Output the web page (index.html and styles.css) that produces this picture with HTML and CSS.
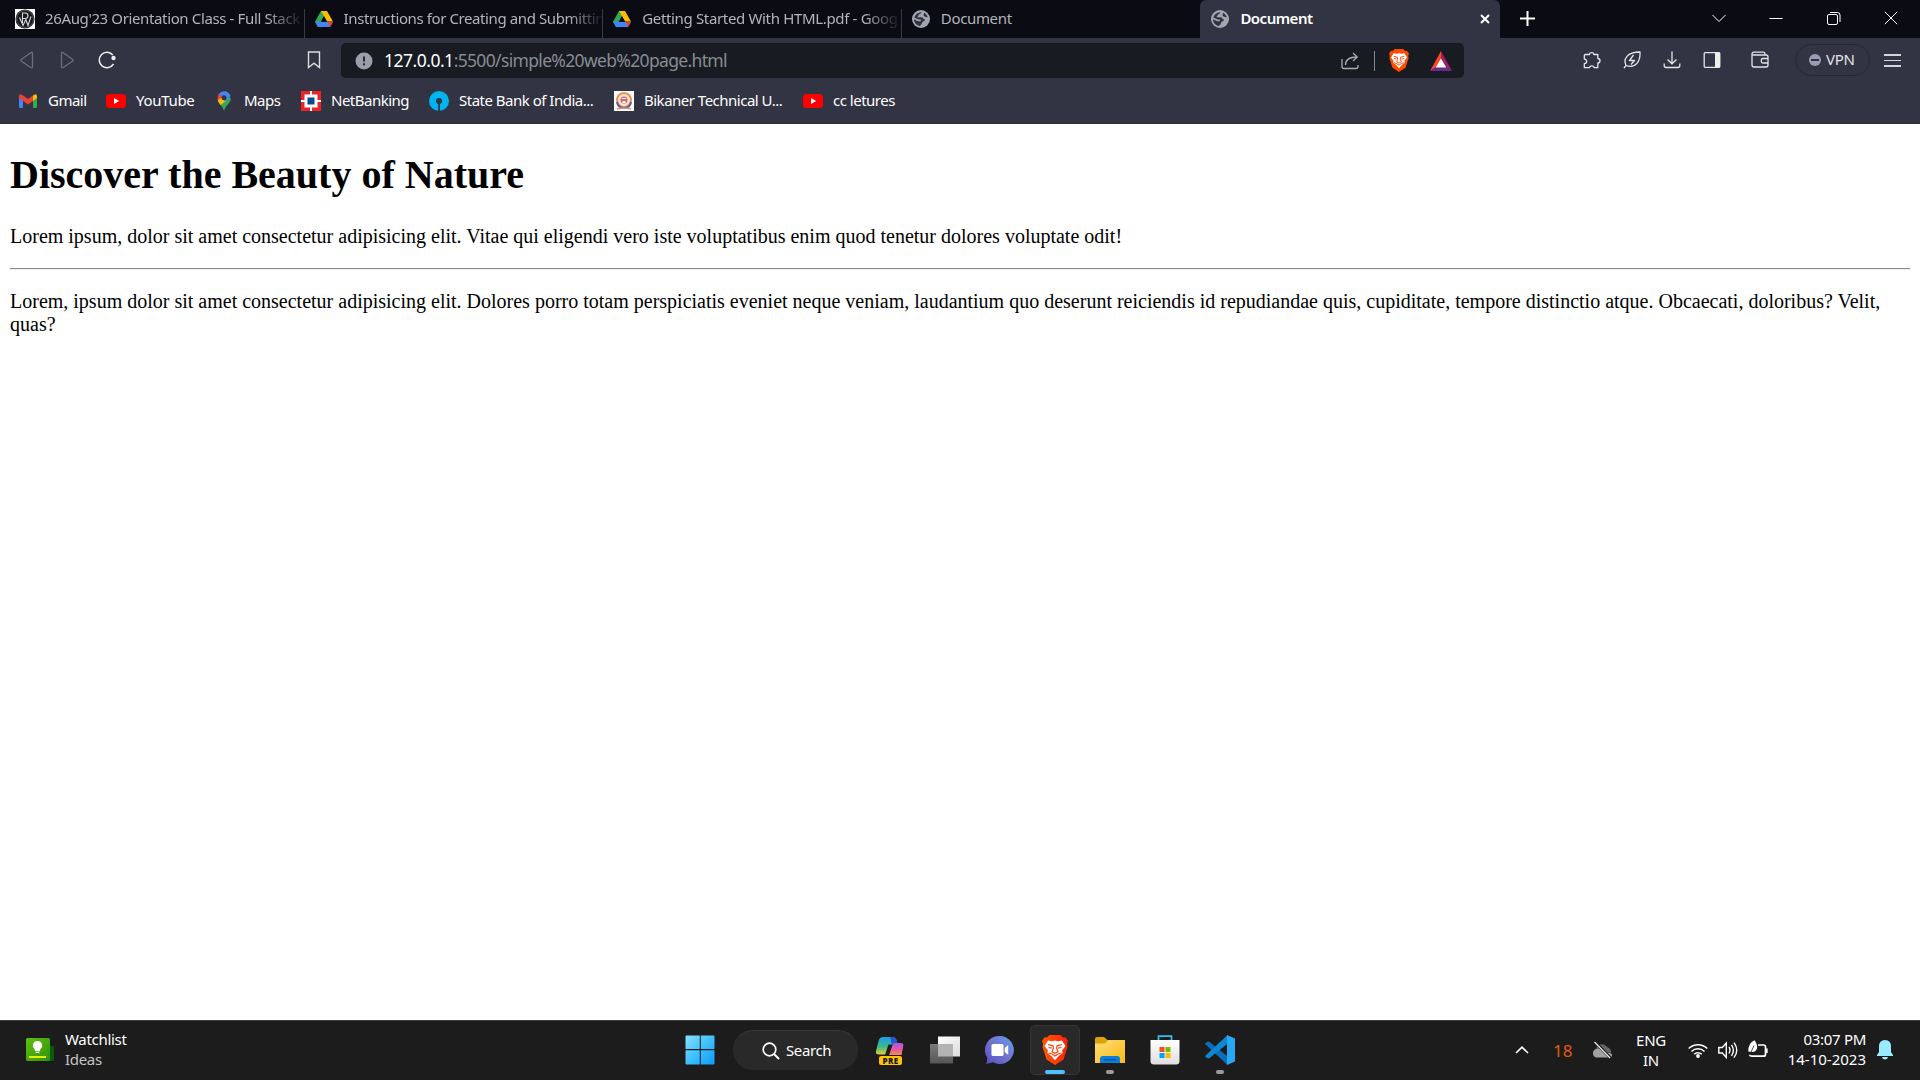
FILE: index.html
```html
<!DOCTYPE html>
<html lang="en">
<head>
<meta charset="utf-8">
<title>Document</title>
<link rel="stylesheet" href="styles.css">
</head>
<body>
<svg class="defs" aria-hidden="true">
  <defs>
    <linearGradient id="gWin" x1="0" y1="0" x2="1" y2="1"><stop offset="0" stop-color="#8be0ff"/><stop offset=".5" stop-color="#3fc0fb"/><stop offset="1" stop-color="#0a9bfb"/></linearGradient>
    <linearGradient id="gBrave" x1="0" y1="0" x2="1" y2="0"><stop offset="0" stop-color="#ff5a00"/><stop offset="1" stop-color="#ff1f0a"/></linearGradient>
    <linearGradient id="gChat" x1="0" y1="1" x2="1" y2="0"><stop offset="0" stop-color="#5451c4"/><stop offset=".5" stop-color="#7372cc"/><stop offset="1" stop-color="#5f9fee"/></linearGradient>
    <linearGradient id="gFolder" x1="0" y1="0" x2="1" y2="1"><stop offset="0" stop-color="#ffdf78"/><stop offset="1" stop-color="#fcb813"/></linearGradient>
    <linearGradient id="gCopA" x1="0" y1="0" x2="0" y2="1"><stop offset="0" stop-color="#1f9cf0"/><stop offset=".55" stop-color="#3bb98a"/><stop offset="1" stop-color="#e8cf2c"/></linearGradient>
    <linearGradient id="gCopB" x1="0" y1="0" x2="0" y2="1"><stop offset="0" stop-color="#a457ef"/><stop offset=".6" stop-color="#ec5c95"/><stop offset="1" stop-color="#f98b4e"/></linearGradient>
    <linearGradient id="gView" x1="0" y1="0" x2="1" y2="1"><stop offset="0" stop-color="#ffffff"/><stop offset="1" stop-color="#dcdcdc"/></linearGradient>
    <linearGradient id="gGlass" x1="0" y1="0" x2="0" y2="1"><stop offset="0" stop-color="#7a7a7a"/><stop offset="1" stop-color="#565656"/></linearGradient>
    <linearGradient id="gWatch" x1="0" y1="0" x2="1" y2="1"><stop offset="0" stop-color="#5fc010"/><stop offset="1" stop-color="#2e930c"/></linearGradient>
    <linearGradient id="gStore" x1="0" y1="0" x2="0" y2="1"><stop offset="0" stop-color="#ffffff"/><stop offset="1" stop-color="#dedede"/></linearGradient>
  </defs>
  <symbol id="drive" viewBox="0 0 18 16"><path d="M6 0h6L6.100 10.500 3 16 0 10.700z" fill="#31a852"/><path d="M6 0h6l6 10.600h-6z" fill="#fbbc04"/><path d="M0 10.700h18L15 16H3z" fill="#4285f4"/><path d="M12.500 10.700H18L15 16z" fill="#ea4335"/><path d="M9 5.300l3 5.400H6z" fill="#0b0b14"/></symbol>
  <symbol id="globe" viewBox="0 0 18 18"><circle cx="9" cy="9" r="9" fill="#a2a6b0"/><path d="M9.500 2.200Q8.800 4.200 6.800 4.600 6.500 6.300 5.200 7.200H9.500Q11.600 7.200 11.500 9.300H13Q13.200 11.500 10.800 11.600L9.600 14 8 16C4.500 15.500 2 12.700 2 9.300L6 11.200H8.800V9.500H6.500L2.300 7.600C3.200 4.500 6 2.200 9.500 2.200z" fill="#32333f"/><path d="M12 2.700l-.5 2.500 1.300 1.500 3 .6C15 5 13.800 3.500 12 2.700z" fill="#32333f"/></symbol>
  <symbol id="youtube" viewBox="0 0 20 14"><rect width="20" height="14" rx="3.500" fill="#f00"/><path d="M8 4l5.200 3L8 10z" fill="#fff"/></symbol>
  <symbol id="lion" viewBox="0 0 26 30"><path d="M7.500 0h11l2.500 2.500 2.500-.3L26 6l-1 3 .5 3-4 12.500L13 30l-8.500-5.500L.5 12 1 9 0 6l2.500-3.800 2.500.3z"/><path d="M6 5.500l4 .7 3-.7 3 .7 4-.7 3.500 5.500-3.500 4.500.7 2.500-4 3L13 25.200 9.300 21l-4-3 .7-2.500L2.500 11z" fill="#fff"/><g fill="none" stroke="#ff4408" stroke-width="1.200"><path d="M6 9.500l5 1.300.3 2.700-1.300 3.200 3 1.600 3-1.600-1.300-3.200.3-2.700 5-1.300M6.500 12.500l3.300.6M19.500 12.500l-3.300.6M6.500 18l3.500 1 3 2 3-2 3.500-1"/></g></symbol>
</svg>

<header class="browser">
  <div class="tabstrip">
    <div class="tab">
      <svg class="fav" viewBox="0 0 20 20"><path d="M0 0h20v20H0z" fill="#fff"/><circle cx="10" cy="10" r="9.500" fill="#15191f"/><circle cx="10" cy="10" r="8.500" fill="none" stroke="#777" stroke-width=".6"/><path d="M7.500 14V4H10q3 0 3 2.700T10 9.500H8M4.500 8.500l3.500 8 2.800-6 2.200 6L16 7.500" fill="none" stroke="#d8d8d8" stroke-width="1.100"/></svg>
      <span class="tab-title t1">26Aug'23 Orientation Class - Full Stack</span>
    </div>
    <div class="tab"><svg class="fav drive"><use href="#drive"/></svg><span class="tab-title t2">Instructions for Creating and Submittin</span></div>
    <div class="tab"><svg class="fav drive"><use href="#drive"/></svg><span class="tab-title t3">Getting Started With HTML.pdf - Goog</span></div>
    <div class="tab last"><svg class="fav globe"><use href="#globe"/></svg><span class="tab-title">Document</span></div>
    <div class="tab active"><svg class="fav globe"><use href="#globe"/></svg><span class="tab-title">Document</span>
      <svg class="tab-close" viewBox="0 0 10 10"><path d="M1 1l8 8M9 1L1 9" stroke="#fff" stroke-width="2"/></svg></div>
    <svg class="new-tab" viewBox="0 0 15 15"><path d="M7.500 0v15M0 7.500h15" stroke="#fff" stroke-width="2"/></svg>
    <div class="window-controls">
      <svg viewBox="0 0 14 14"><path d="M.5 4L7 10.500 13.500 4" stroke="#fff" fill="none"/></svg>
      <svg viewBox="0 0 14 14"><path d="M.5 7.500h13" stroke="#fff"/></svg>
      <svg viewBox="0 0 14 14"><rect x=".5" y="3.500" width="10" height="10" rx="1.500" fill="none" stroke="#fff"/><path d="M3 1.500h7.500a2.500 2.500 0 0 1 2.500 2.500V11" fill="none" stroke="#fff"/></svg>
      <svg viewBox="0 0 14 14"><path d="M.8.800l12.400 12.400M13.200.800L.8 13.200" stroke="#fff"/></svg>
    </div>
  </div>

  <div class="toolbar">
    <nav class="nav">
      <svg viewBox="0 0 20 20"><path d="M15.500 3.500v13q0 2-1.700 1L4.500 11.200q-1.300-1 0-2L13.800 2.700q1.700-1.200 1.700.8z" fill="none" stroke="#6c6e7a" stroke-width="1.300"/></svg>
      <svg viewBox="0 0 20 20"><path d="M4.500 3.500v13q0 2 1.700 1l9.300-6.300q1.300-1 0-2L6.200 2.700q-1.700-1.200-1.700.8z" fill="none" stroke="#6c6e7a" stroke-width="1.300"/></svg>
      <svg viewBox="0 0 20 20"><path d="M15.800 5A7.700 7.700 0 1 0 16.500 14" fill="none" stroke="#eee" stroke-width="1.500"/><circle cx="16.500" cy="8" r="2.200" fill="#eee"/></svg>
    </nav>
    <svg class="save" viewBox="0 0 14 18"><path d="M1.500 1h11v15.500L7 12.200l-5.500 4.300z" fill="none" stroke="#ddd" stroke-width="1.400"/></svg>
    <div class="address">
      <svg class="info" viewBox="0 0 18 18"><circle cx="9" cy="9" r="8.500" fill="#9a9ea8"/><path d="M9 4.500v5M9 11.200v2" stroke="#181b22" stroke-width="1.800"/></svg>
      <div class="url"><span class="host">127.0.0.1</span><span class="path">:5500/simple%20web%20page.html</span></div>
      <svg class="share" viewBox="0 0 18 18"><path d="M1 7v7.500q0 2 2 2h12q2 0 2-2V13M4.500 13q0-8 11.500-8M12 1l4.200 4L12 9" fill="none" stroke="#a9abb0" stroke-width="1.300"/></svg>
      <span class="rule"></span>
      <svg class="shield"><use href="#lion"/></svg>
      <svg class="bat" viewBox="0 0 22 20"><path d="M11 0L0 20l11-6.500z" fill="#ff4724"/><path d="M11 0l11 20-11-6.500z" fill="#9e1f63"/><path d="M0 20h22l-6-4H6z" fill="#662d91"/><path d="M11 7.500l5.300 9H5.700z" fill="#fff"/></svg>
    </div>
    <div class="actions">
      <svg viewBox="0 0 18 18"><path d="M2.500 3.500h3.800a2.400 2.400 0 0 1 4.700 0h3.800v4a2.200 2.200 0 0 1 0 4.400v4.800h-3.500a2.600 2.600 0 0 0-5 0H1.300v-4a2.200 2.200 0 0 0 0-4.700V4.500q0-1 1.200-1z" fill="none" stroke="#e4e4e8" stroke-width="1.300" stroke-linejoin="round"/></svg>
      <svg viewBox="0 0 18 18"><path d="M1 17l2-2.500C0 8 4 1 17 1c.5 9-4 17-14 13.500M10.500 4L6.500 9.500h5L8 13.500" fill="none" stroke="#e4e4e8" stroke-width="1.300" stroke-linejoin="round"/></svg>
      <svg viewBox="0 0 18 18"><path d="M9 .5v12M4.500 8.500L9 12.800l4.500-4.300M1.200 12.500v2q0 2 2 2h11.600q2 0 2-2v-2" fill="none" stroke="#e4e4e8" stroke-width="1.300"/></svg>
      <svg viewBox="0 0 18 18"><rect x="1.200" y="1.700" width="15.600" height="14.600" rx="1" fill="none" stroke="#e4e4e8" stroke-width="1.300"/><path d="M12 1.500h5v15h-5z" fill="#eee"/></svg>
      <svg class="wallet" viewBox="0 0 18 18"><path d="M14 4V3q0-1.800-1.800-1.800H3Q1 1.200 1 3v11q0 2 2 2h12q2 0 2-2V6q0-2-2-2H3Q1 4 1 2.800M17 7.500h-5.200q-1.500 0-1.500 1.500v1.500q0 1.500 1.500 1.500H17" fill="none" stroke="#e4e4e8" stroke-width="1.300"/></svg>
    </div>
    <div class="vpn"><i></i><span>VPN</span></div>
    <div class="menu"><i></i><i></i><i></i></div>
  </div>

  <div class="bookmarks">
    <a><svg viewBox="0 0 20 20"><path d="M1 16V6l4 3v8H2.200Q1 17 1 16z" fill="#4285f4"/><path d="M19 16V6l-4 3v8h2.800q1.200 0 1.200-1z" fill="#34a853"/><path d="M15 4.500l1-.8q3-1.200 3 1.800V7l-4 3z" fill="#fbbc04"/><path d="M1 7V5.500q0-3 3-1.800L10 8l5-3.500V10l-5 3.500z" fill="#ea4335"/></svg><span>Gmail</span></a>
    <a><svg viewBox="0 -3 20 20"><use href="#youtube" width="20" height="14"/></svg><span>YouTube</span></a>
    <a><svg viewBox="0 0 20 20"><path d="M10 20c-.8-4-3-5-5-8l7-8 4.700 3c.7 5-4.700 6-6.700 13z" fill="#34a853"/><path d="M3.700 8.500l4.500-4L12 10l-5.500 4Q3.700 11 3.700 8.500z" fill="#fbbc04"/><path d="M3.800 9C3.300 6 4 4 5 2.700L9 6z" fill="#ea4335"/><path d="M5 2.700C8-1 15-.8 16.500 5L11 11 8.500 6z" fill="#4285f4"/><circle cx="10" cy="6.800" r="2.500" fill="#323443"/></svg><span>Maps</span></a>
    <a><svg viewBox="0 0 20 20"><path d="M0 0h20v20H0z" fill="#ed232a"/><path d="M3.500 3.500h13v13h-13zM9 0h2v20H9zM0 9h20v2H0z" fill="#fff"/><path d="M6.500 6.500h7v7h-7z" fill="#004c8f"/></svg><span>NetBanking</span></a>
    <a><svg viewBox="0 0 20 20"><circle cx="10" cy="10" r="10" fill="#00b5ef"/><path d="M9.100 10h1.800v10H9.100z" fill="#323443"/><circle cx="10" cy="10" r="3" fill="#323443"/></svg><span>State Bank of India...</span></a>
    <a><svg viewBox="0 0 20 20"><path d="M0 0h20v20H0z" fill="#fff"/><circle cx="10" cy="9" r="7" fill="#fbe6d4" stroke="#e6935b" stroke-width="2"/><path d="M3 11q1 6 7 6t7-6" fill="none" stroke="#5b5a9c" stroke-width="2"/><circle cx="10" cy="9" r="3.500" fill="#c96a6a"/><path d="M8 7h4v1H8zM8.500 10h3v2h-3z" fill="#fff"/><path d="M3 18q7-2 14 0" stroke="#e6935b" stroke-width="1.500" fill="none"/></svg><span>Bikaner Technical U...</span></a>
    <a><svg viewBox="0 -3 20 20"><use href="#youtube" width="20" height="14"/></svg><span>cc letures</span></a>
  </div>
</header>

<main class="page">
  <h1>Discover the Beauty of Nature</h1>
  <p>Lorem ipsum, dolor sit amet consectetur adipisicing elit. Vitae qui eligendi vero iste voluptatibus enim quod tenetur dolores voluptate odit!</p>
  <hr>
  <p>Lorem, ipsum dolor sit amet consectetur adipisicing elit. Dolores porro totam perspiciatis eveniet neque veniam, laudantium quo deserunt reiciendis id repudiandae quis, cupiditate, tempore distinctio atque. Obcaecati, doloribus? Velit, quas?</p>
</main>

<footer class="taskbar">
  <div class="widget">
    <svg viewBox="0 0 28 24"><rect x="14" y="8" width="14" height="15" rx="1.500" fill="#0c5a12"/><rect width="24" height="23" rx="1.500" fill="url(#gWatch)"/><path d="M3 18h17v2H3z" fill="#e3f000"/><path d="M11.500 3a4.500 4.500 0 0 0-2.700 8.200V13h5.400v-1.800A4.500 4.500 0 0 0 11.500 3zM9.500 13.700h4v1.300h-4z" fill="#fff"/></svg>
    <div class="two-line"><span>Watchlist</span><span class="dim">Ideas</span></div>
  </div>

  <div class="apps">
    <div class="app"><svg viewBox="0 0 30 30"><path d="M1.500.500h13.300v13.500H.500V1.500q0-1 1-1zM15.800.500h12.700q1 0 1 1v12.500H15.800zM.5 15.200h14.300v14.300H1.500q-1 0-1-1zM15.800 15.200h13.700v13.300q0 1-1 1H15.800z" fill="url(#gWin)"/></svg></div>
    <div class="search"><svg viewBox="0 0 18 18"><circle cx="7.500" cy="7.500" r="6.300" fill="none" stroke="#fff" stroke-width="1.700"/><path d="M12 12l5 5" stroke="#fff" stroke-width="2"/></svg><span>Search</span></div>
    <div class="app copilot"><svg viewBox="0 0 30 30"><path d="M8 2h9.500q3 0 4 4l.8 3H18q-1.500 0-2.200 2.500L13 19.500H4q-3.700 0-3-3.500L3.500 6Q4.500 2 8 2z" fill="url(#gCopA)"/><path d="M15 2h3q3 0 4 4l.8 3H18q-2 0-2-3.500Q16 3 15 2z" fill="#2757c9"/><path d="M13.500 9.500h3.500L13.500 20H10z" fill="#1c1c1c"/><path d="M19.500 8H26q3 0 2.200 3.500L26.500 20H14l1-2.500 2-6Q17.700 8 19.500 8z" fill="url(#gCopB)"/></svg><b>PRE</b></div>
    <div class="app"><svg viewBox="0 0 30 30"><path d="M8 1.500h22v20H8z" fill="url(#gView)"/><path d="M0 9h23v19.500H0z" fill="url(#gGlass)"/><path d="M8 9h15v12.500H8z" fill="#b3b3b3"/></svg></div>
    <div class="app"><svg viewBox="0 0 30 30"><path d="M14.800 1A14 14 0 1 1 8 27.200L1 29q1.500-3 1.200-6.500A14 14 0 0 1 14.800 1z" fill="url(#gChat)"/><rect x="6.500" y="9" width="12" height="12" rx="1.500" fill="#fff"/><path d="M19.700 13l3.500-3v10l-3.500-3z" fill="#fff"/></svg></div>
    <div class="app current"><svg class="big-lion"><use href="#lion"/></svg></div>
    <div class="app running"><svg viewBox="0 0 30 30"><path d="M0 4q0-2 2-2h7l4 3.500V12H0z" fill="#dca20a"/><path d="M0 8.500h10l3-3.500h17v23H0z" fill="url(#gFolder)"/><path d="M5 28v-4q0-3 3-3h14q3 0 3 3v4z" fill="#0b7fd8"/><path d="M9 24.800h12" stroke="#064b96" stroke-width="1.200"/></svg></div>
    <div class="app"><svg viewBox="0 0 30 30"><path d="M8.500 6V1.200h13V6" fill="none" stroke="#2fc1f5" stroke-width="1.700"/><path d="M.5 5h29v21q0 3.500-3.500 3.500H4Q.5 29.500.5 26z" fill="url(#gStore)"/><path d="M9.500 12h5v5h-5z" fill="#f25022"/><path d="M15.500 12h5v5h-5z" fill="#7fba00"/><path d="M9.500 18h5v5h-5z" fill="#00a4ef"/><path d="M15.500 18h5v5h-5z" fill="#ffb900"/></svg></div>
    <div class="app running"><svg viewBox="0 0 30 30"><path d="M2 7l2-.5L24 22.500 22 29.500.5 9.500q-.5-1 0-1.500z" fill="#0a6fba"/><path d="M2 23l2 .5L24 7.500 22 .5.5 20.500q-.5 1 0 1.500z" fill="#0f86d2"/><path d="M22 0l8 3.500v23L22 30V0z" fill="#28a8f2"/></svg></div>
  </div>

  <div class="tray">
    <svg class="up" viewBox="0 0 14 8"><path d="M1 7l6-5.800L13 7" fill="none" stroke="#fff" stroke-width="1.700"/></svg>
    <span class="temp">18</span>
    <svg class="cloud" viewBox="0 0 22 18"><path d="M5 9a6 6 0 0 1 11-3q4.500 1.500 4 6z" fill="#666"/><path d="M5 16.500a4.500 4.500 0 0 1 0-8.500q4-1 6 2 2-1 4 1l3 1q3 0 3 2.300t-3 2.200z" fill="#a2a2a2"/><path d="M4 1l15.500 16" stroke="#1c1c1c" stroke-width="3"/><path d="M3.500 1l15.500 16" stroke="#eee" stroke-width="1.200"/></svg>
    <div class="lang"><span>ENG</span><span>IN</span></div>
    <div class="status">
      <svg viewBox="0 0 20 20"><g fill="none" stroke="#fff" stroke-width="1.500"><path d="M.7 8.500a13.200 13.200 0 0 1 18.600 0M3.500 11.500a9.200 9.200 0 0 1 13 0M6.200 14.300a5.400 5.400 0 0 1 7.600 0"/></g><circle cx="10" cy="16" r="1.900" fill="#fff"/></svg>
      <svg viewBox="0 0 20 20"><path d="M.8 7.500h3.500l4-4.500v14.500l-4-4.500H.8zM11 7q2 3 0 6.500M13.500 4.800q3.800 5.400 0 11M16 2.700q5.500 7.500 0 15" fill="none" stroke="#fff" stroke-width="1.400"/></svg>
      <svg viewBox="0 0 20 20"><path d="M10 5h5.500q2 0 2 2v7.200q0 2-2 2H4q-2 0-2.500-1.500M18.800 8.500v4.500" fill="none" stroke="#fff" stroke-width="1.700"/><path d="M6.500.2Q0 3 .3 11.500L3.500 12q4 .5 5.500-3.500.8-4-2.500-8.300z" fill="#fff"/><path d="M6 5.500L2 14.500" stroke="#1c1c1c" stroke-width=".8"/></svg>
    </div>
    <div class="clock"><span>03:07 PM</span><span class="date">14-10-2023</span></div>
    <svg class="bell" viewBox="0 0 16 20"><path d="M8 0q6 0 6 6.500V12l2 3v1H0v-1l2-3V6.500Q2 0 8 0zM5 17h6q-.5 2.500-3 2.500T5 17z" fill="#99ebff"/></svg>
  </div>
</footer>
</body>
</html>
```
FILE: styles.css
```css
* { box-sizing: border-box; }
body {
  margin: 0;
  width: 1920px;
  height: 1080px;
  overflow: hidden;
  display: flex;
  flex-direction: column;
  background: #fff;
  font-family: "Noto Sans", "Open Sans", sans-serif;
  font-size: 15px;
}
svg { display: block; flex: none; }
.defs { position: absolute; width: 0; height: 0; }

/* Browser chrome */
.browser { height: 124px; background: #323443; border-bottom: 1px solid #2a2c38; color: #fff; }
.tabstrip { display: flex; height: 38px; background: #0b0b14; padding-left: 6px; }
.tab { width: 298.600px; flex: none; padding-left: 9px; display: flex; align-items: center; gap: 10px; color: #b4b4b8; }
.tab:not(.last):not(.active) { background: linear-gradient(#3b3b3e, #3b3b3e) right bottom / 1px 29px no-repeat; }
.fav { width: 20px; height: 20px; }
.fav.drive { width: 18px; height: 16px; margin-left: 1px; }
.fav.globe { width: 18px; height: 18px; margin-left: 1px; }
.tab-title { flex: 1; margin-right: 1px; padding-bottom: 2px; white-space: nowrap; letter-spacing: -.340px; }
.fav.drive + .tab-title, .fav.globe + .tab-title { margin-left: 1px; }
.t1, .t2, .t3 { mask-image: linear-gradient(90deg, #000 86%, transparent 100%); }
.t1 { letter-spacing: -.370px; }
.t2 { letter-spacing: -.400px; }
.tab.active { background: #323443; color: #fff; font-weight: 600; width: 299.600px; border-radius: 6px 6px 0 0; padding-left: 10px; }
.active .tab-title { letter-spacing: -.500px; }
.tab-close { width: 10px; height: 10px; margin-right: 10px; }
.new-tab { width: 15px; height: 15px; margin: 11px 0 0 20px; }
.window-controls { margin-left: auto; padding: 11px 22px 0 0; display: flex; gap: 43.300px; }
.window-controls svg { width: 14px; height: 14px; }

.toolbar { display: flex; align-items: center; height: 45px; }
.nav { display: flex; gap: 20px; padding: 0 0 1px 17px; width: 307px; }
.nav svg { width: 20px; height: 20px; }
.save { width: 14px; height: 18px; margin: 0 20px 1px 0; }
.address { width: 1123px; height: 35px; border-radius: 5px; background: #181b22; display: flex; align-items: center; padding: 0 12px 0 14px; }
.info { width: 18px; height: 18px; }
.url { flex: 1; padding: 0 0 2px 11px; font-size: 17.500px; letter-spacing: -.660px; }
.host { letter-spacing: -.500px; }
.path { color: #888b91; }
.share { width: 18px; height: 18px; }
.rule { width: 1px; height: 20px; background: #85878c; margin: 0 14px 0 15px; }
.shield { width: 20px; height: 23px; fill: #ff4a00; }
.bat { width: 22px; height: 20px; margin-left: 21px; }
.actions { display: flex; gap: 22px; margin-left: 119px; padding-bottom: 1px; }
.actions svg { width: 18px; height: 18px; }
.actions .wallet { margin-left: 8px; }
.vpn { width: 75px; height: 32px; margin: 0 0 1px 26px; border: 1px solid #262834; border-radius: 16px; display: flex; align-items: center; padding-left: 13px; gap: 5px; color: #e3e3e8; letter-spacing: -.300px; }
.vpn span { padding-bottom: 2px; }
.vpn i { width: 12px; height: 12px; border-radius: 50%; background: linear-gradient(#323443, #323443) center / 8px 2px no-repeat #9a9bb5; }
.menu { width: 17px; margin-left: 14px; display: grid; gap: 4px; }
.menu i { height: 1.500px; background: #d5d5d9; }

.bookmarks { display: grid; grid-template-columns: 88px 108px 87px 128px 185px 189px 120px; padding-left: 18px; height: 36px; }
.bookmarks a { display: flex; align-items: center; gap: 10px; white-space: nowrap; letter-spacing: -.500px; }
.bookmarks a:nth-child(2) { letter-spacing: -.300px; }
.bookmarks svg { width: 20px; height: 20px; }
.bookmarks span { padding-bottom: 2px; }

/* Document viewport */
.page { flex: 1; padding: 0 10px; font: 20px/23px "Liberation Serif", "Times New Roman", serif; color: #000; }
.page h1 { font-size: 40px; line-height: 46px; margin: 28px 0 27px; }
.page p { margin: 20px 0; }
.page hr { margin: 20px 0; border: 0; border-top: 1px solid #8a8a8a; border-bottom: 1px solid #eee; }

/* Taskbar */
.taskbar { height: 60px; background: #1c1c1c; border-top: 1px solid #3f3f3f; padding-bottom: 1px; display: flex; align-items: center; color: #fff; }
.widget { display: flex; align-items: center; gap: 11px; width: 673px; padding-left: 26px; }
.widget svg { width: 28px; height: 24px; }
.two-line, .lang, .clock { display: flex; flex-direction: column; line-height: 20px; letter-spacing: -.300px; padding-bottom: 2px; }
.lang { padding-bottom: 0; }
.dim { color: #c4c4c4; }
.apps { display: flex; align-items: center; gap: 5px; }
.app { position: relative; width: 50px; height: 50px; display: grid; place-items: center; border-radius: 5px; }
.app svg { width: 30px; height: 30px; }
.app:first-child { width: 54px; margin-right: 1px; }
.search { width: 125px; height: 40px; border-radius: 20px; background: #292929; border-top: 1px solid #363636; display: flex; align-items: center; padding-left: 29px; gap: 6px; letter-spacing: -.400px; margin-right: 2px; }
.search span { padding-bottom: 1px; }
.search svg { width: 18px; height: 18px; }
.copilot b { position: absolute; left: 14px; top: 31px; width: 23px; height: 9px; border-radius: 2px; background: #ffc20e; color: #1c1c1c; font: 800 8px/9px "Open Sans", sans-serif; letter-spacing: .4px; text-align: center; }
.current { background: #292929; border: 1px solid #353535; }
.app .big-lion { width: 26px; height: 30px; fill: url(#gBrave); }
.current::after, .running::after { content: ""; position: absolute; bottom: 0; left: 14px; width: 20px; height: 4px; border-radius: 2px; background: #4cc2ff; }
.running::after { left: 21px; bottom: 1px; width: 8px; background: #9a9a9a; }
.tray { flex: 1; display: flex; align-items: center; justify-content: flex-end; padding-right: 27px; }
.up { width: 14px; height: 8px; margin-right: 24px; }
.temp { color: #e3590f; font-size: 17px; width: 18px; }
.cloud { width: 22px; height: 18px; margin: 0 22px 0 20px; }
.lang { align-items: center; width: 32px; margin-right: 21px; }
.status { display: flex; gap: 10px; }
.status svg { width: 20px; height: 20px; }
.clock { align-items: flex-end; width: 98px; margin-right: 11px; }
.date { letter-spacing: 0; }
.bell { width: 16px; height: 20px; }
```
